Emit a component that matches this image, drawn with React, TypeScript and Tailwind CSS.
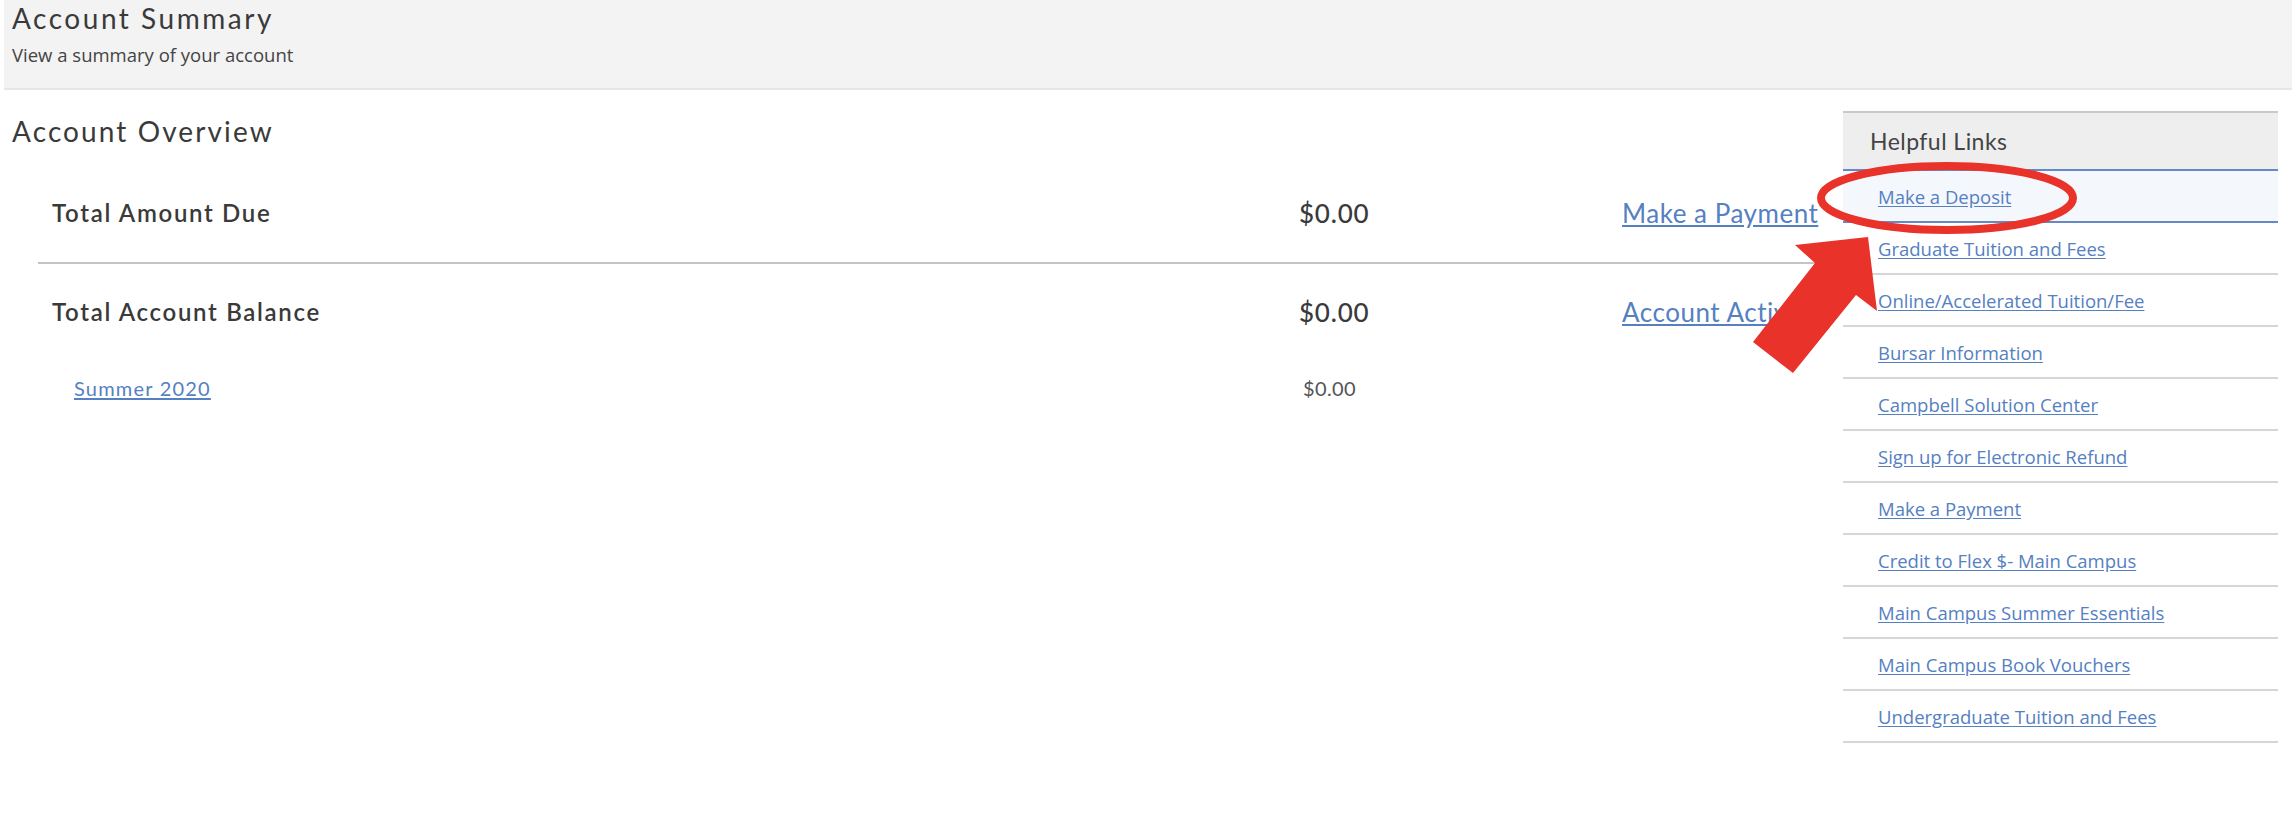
import React from "react";

const HELPFUL_LINKS = [
  "Make a Deposit",
  "Graduate Tuition and Fees",
  "Online/Accelerated Tuition/Fee",
  "Bursar Information",
  "Campbell Solution Center",
  "Sign up for Electronic Refund",
  "Make a Payment",
  "Credit to Flex $- Main Campus",
  "Main Campus Summer Essentials",
  "Main Campus Book Vouchers",
  "Undergraduate Tuition and Fees",
];

const heading = "font-['Lato','Open_Sans',sans-serif]";
const body = "font-['Open_Sans','Liberation_Sans',sans-serif]";

function HelpfulLinks() {
  return (
    <aside className="mr-[14px] mt-[21px] w-[435px] shrink-0">
      <div className="flex h-[60px] items-center border-t-2 border-b-2 border-t-[#c9c9c9] border-b-[#6489c4] bg-[#eeeeee] pl-[27px]">
        <span className={`${heading} text-[23px] leading-none tracking-[0.02em] text-[#444]`}>Helpful Links</span>
      </div>
      <ul>
        {HELPFUL_LINKS.map((label, idx) => (
          <li
            key={label}
            className={
              idx === 0
                ? "flex h-[52px] items-center border-b-2 border-[#6489c4] bg-[#f4f8fd] pl-[35px] pt-[3px]"
                : "flex h-[52px] items-center border-b-2 border-[#d6d6d6] pl-[35px] pt-[3px]"
            }
          >
            <a href="#" className={`${body} text-[18.5px] leading-none text-[#5580c2] underline underline-offset-2`}>
              {label}
            </a>
          </li>
        ))}
      </ul>
    </aside>
  );
}

function AccountOverview() {
  return (
    <main className="min-w-0 flex-1 pl-[12px] pt-[27px]">
      <h2 className={`${heading} text-[28px] leading-none tracking-[0.075em] text-[#3a3a3a]`}>Account Overview</h2>

      <div className={`${heading} ml-[26px] mr-[17px] mt-[19px]`}>
        {/* Total Amount Due */}
        <div className="grid h-[98px] grid-cols-[1247px_323px_1fr] items-center pl-[14px]">
          <div className="text-[24px] font-semibold leading-none tracking-[0.07em] text-[#3a3a3a]">Total Amount Due</div>
          <div className="text-[26px] font-medium leading-none tracking-[0.03em] text-[#3a3a3a]">$0.00</div>
          <a href="#" className="whitespace-nowrap text-[26px] leading-none tracking-[0.02em] text-[#5580c2] underline underline-offset-2">
            Make a Payment
          </a>
        </div>
        <div className="h-[2px] bg-[#c4c4c4]" />

        {/* Total Account Balance */}
        <div className="grid h-[96px] grid-cols-[1247px_323px_1fr] items-center pl-[14px]">
          <div className="text-[24px] font-semibold leading-none tracking-[0.07em] text-[#3a3a3a]">Total Account Balance</div>
          <div className="text-[26px] font-medium leading-none tracking-[0.03em] text-[#3a3a3a]">$0.00</div>
          <a href="#" className="whitespace-nowrap text-[26px] leading-none tracking-[0.02em] text-[#5580c2] underline underline-offset-2">
            Account Activity
          </a>
        </div>

        {/* Terms */}
        <div className="grid h-[55px] grid-cols-[1247px_323px_1fr] items-center pl-[14px]">
          <a href="#" className="justify-self-start ml-[22px] text-[20px] leading-none tracking-[0.06em] text-[#5580c2] underline underline-offset-2">
            Summer 2020
          </a>
          <div className="pl-[4px] text-[20px] leading-none tracking-[0.02em] text-[#555]">$0.00</div>
          <div />
        </div>
      </div>
    </main>
  );
}

export default function App() {
  return (
    <div className="relative h-[826px] w-[2292px] overflow-hidden bg-white">
      <header className="ml-[4px] h-[90px] border-b-2 border-[#e6e6e6] bg-[#f3f3f3] pl-[8px] pt-[4px]">
        <h1 className={`${heading} text-[28px] leading-none tracking-[0.09em] text-[#3a3a3a]`}>Account Summary</h1>
        <p className={`${body} mt-[14px] text-[18.5px] leading-none text-[#444]`}>View a summary of your account</p>
      </header>

      <div className="flex">
        <AccountOverview />
        <HelpfulLinks />
      </div>

      {/* annotation drawn over the page */}
      <svg
        className="pointer-events-none absolute inset-0"
        width="2292"
        height="826"
        viewBox="0 0 2292 826"
      >
        <ellipse cx="1947" cy="198" rx="126" ry="32" fill="none" stroke="#e8322a" strokeWidth="8" />
        <polygon
          points="1868,237 1795,245 1815,263 1753,342 1793,373 1856,295 1877,311"
          fill="#e8322a"
        />
      </svg>
    </div>
  );
}
